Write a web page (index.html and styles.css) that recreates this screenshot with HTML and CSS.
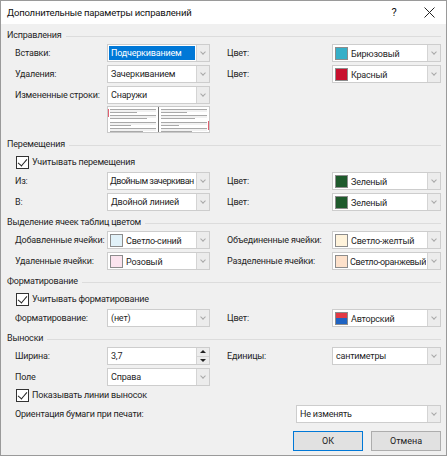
FILE: index.html
```html
<!DOCTYPE html>
<html lang="ru">
<head>
  <meta charset="UTF-8" />
  <title>Дополнительные параметры исправлений</title>
  <link rel="stylesheet" href="styles.css">
</head>
<body>

<div class="dialog">
  <div class="titlebar">
    <span class="title">Дополнительные параметры исправлений</span>
    <span class="help">?</span>
    <span class="close">
      <svg width="11" height="11" viewBox="0 0 11 11"><path d="M0.5 0.5 L10.5 10.5 M10.5 0.5 L0.5 10.5" stroke="#222" stroke-width="1" fill="none"/></svg>
    </span>
  </div>

  <div class="content">
    <!-- Исправления -->
    <div class="group-head"><span>Исправления</span></div>
    <div class="row">
      <label>Вставки:</label>
      <div class="combo"><span class="value selected">Подчеркиванием</span><span class="arrow"></span></div>
      <label class="second">Цвет:</label>
      <div class="combo"><span class="swatch turquoise"></span><span class="value low">Бирюзовый</span><span class="arrow"></span></div>
    </div>
    <div class="row">
      <label>Удаления:</label>
      <div class="combo"><span class="value">Зачеркиванием</span><span class="arrow"></span></div>
      <label class="second">Цвет:</label>
      <div class="combo"><span class="swatch red"></span><span class="value low">Красный</span><span class="arrow"></span></div>
    </div>
    <div class="row">
      <label>Измененные строки:</label>
      <div class="combo"><span class="value">Снаружи</span><span class="arrow"></span></div>
    </div>
    <div class="preview">
      <svg width="103" height="27" viewBox="0 0 103 27">
        <rect x="0.5" y="0.5" width="102" height="26" fill="#fff" stroke="#c8c8c8"/>
        <g stroke="#a9a9a9" stroke-width="1">
          <path d="M3 3.5H49 M3 6.5H30 M3 9.5H49 M3 12.5H40 M3 16.5H49 M3 19.5H24 M3 22.5H49 M3 25.5H36"/>
          <path d="M54 3.5H100 M54 6.5H80 M54 9.5H100 M54 12.5H88 M54 16.5H100 M54 19.5H72 M54 22.5H100 M54 25.5H85"/>
        </g>
        <g stroke="#e4e4e4" stroke-width="1">
          <path d="M3 5H49 M3 11H49 M3 18H49 M3 24H49 M54 5H100 M54 11H100 M54 18H100 M54 24H100"/>
        </g>
        <path d="M51.5 1V26" stroke="#707070"/>
        <path d="M1.5 3V11" stroke="#e06070" stroke-width="1"/>
        <path d="M101.5 15V24" stroke="#e06070" stroke-width="1"/>
      </svg>
    </div>

    <!-- Перемещения -->
    <div class="group-head"><span>Перемещения</span></div>
    <div class="check-row"><span class="checkbox checked"></span><span>Учитывать перемещения</span></div>
    <div class="row">
      <label>Из:</label>
      <div class="combo"><span class="value tighter">Двойным зачеркиван</span><span class="arrow"></span></div>
      <label class="second">Цвет:</label>
      <div class="combo"><span class="swatch green"></span><span class="value low">Зеленый</span><span class="arrow"></span></div>
    </div>
    <div class="row">
      <label>В:</label>
      <div class="combo"><span class="value">Двойной линией</span><span class="arrow"></span></div>
      <label class="second">Цвет:</label>
      <div class="combo"><span class="swatch green"></span><span class="value low">Зеленый</span><span class="arrow"></span></div>
    </div>

    <!-- Выделение ячеек -->
    <div class="group-head"><span>Выделение ячеек таблиц цветом</span></div>
    <div class="row">
      <label>Добавленные ячейки:</label>
      <div class="combo"><span class="swatch lightblue"></span><span class="value low">Светло-синий</span><span class="arrow"></span></div>
      <label class="second">Объединенные ячейки:</label>
      <div class="combo"><span class="swatch lightyellow"></span><span class="value low">Светло-желтый</span><span class="arrow"></span></div>
    </div>
    <div class="row">
      <label>Удаленные ячейки:</label>
      <div class="combo"><span class="swatch pink"></span><span class="value low">Розовый</span><span class="arrow"></span></div>
      <label class="second">Разделенные ячейки:</label>
      <div class="combo"><span class="swatch lightorange"></span><span class="value low tight">Светло-оранжевый</span><span class="arrow"></span></div>
    </div>

    <!-- Форматирование -->
    <div class="group-head"><span>Форматирование</span></div>
    <div class="check-row"><span class="checkbox checked"></span><span>Учитывать форматирование</span></div>
    <div class="row">
      <label>Форматирование:</label>
      <div class="combo"><span class="value">(нет)</span><span class="arrow"></span></div>
      <label class="second">Цвет:</label>
      <div class="combo"><span class="swatch author"></span><span class="value low">Авторский</span><span class="arrow"></span></div>
    </div>

    <!-- Выноски -->
    <div class="group-head"><span>Выноски</span></div>
    <div class="row">
      <label>Ширина:</label>
      <div class="combo"><span class="value">3,7</span><span class="spin"><span class="up"></span><span class="down"></span></span></div>
      <label class="second">Единицы:</label>
      <div class="combo"><span class="value">сантиметры</span><span class="arrow"></span></div>
    </div>
    <div class="row">
      <label>Поле</label>
      <div class="combo"><span class="value">Справа</span><span class="arrow"></span></div>
    </div>
    <div class="check-row"><span class="checkbox checked"></span><span>Показывать линии выносок</span></div>
    <div class="row wide">
      <label>Ориентация бумаги при печати:</label>
      <div class="combo"><span class="value">Не изменять</span><span class="arrow"></span></div>
    </div>

    <div class="buttons">
      <button class="btn default">ОК</button>
      <button class="btn">Отмена</button>
    </div>
  </div>
</div>

</body>
</html>
```

FILE: styles.css
```css
* {
  box-sizing: border-box;
}

body {
  margin: 0;
  background-color: #f0f0f0;
  font-family: Roboto, 'Noto Sans', sans-serif;
  font-size: 9px;
  letter-spacing: -0.2px;
  color: #1f1f1f;
}

.dialog {
  width: 447px;
  height: 456px;
  border: 1px solid #9a9a9a;
  background-color: #f0f0f0;
  overflow: hidden;
}

.titlebar {
  display: flex;
  align-items: center;
  height: 23px;
  background-color: #fff;
  padding-left: 6px;
}

.title {
  flex: 1;
  font-size: 9.5px;
  letter-spacing: -0.2px;
  color: #111;
}

.help {
  width: 20px;
  text-align: center;
  font-size: 11px;
  color: #111;
  margin-right: 14px;
}

.close {
  display: flex;
  width: 22px;
  justify-content: center;
  margin-right: 6px;
}

.content {
  padding: 3px 5px 0 6px;
}

.group-head {
  display: flex;
  align-items: center;
  height: 16px;
  margin-top: 3px;
  white-space: nowrap;
}

.group-head:first-child {
  margin-top: 0;
}

.group-head::after {
  content: "";
  flex: 1;
  height: 1px;
  background-color: #dcdcdc;
  margin-left: 4px;
  margin-top: 2px;
}

.row {
  display: grid;
  grid-template-columns: 92px 103px 122px 109px;
  align-items: center;
  height: 18px;
  margin-top: 3px;
  padding-left: 8px;
}

.row label {
  white-space: nowrap;
}

.group-head + .row,
.check-row + .row {
  margin-top: 1px;
}

.row.wide {
  grid-template-columns: 281px 145px;
}

.row label.second {
  padding-left: 17px;
}

.combo {
  display: flex;
  align-items: center;
  height: 18px;
  background-color: #fff;
  border: 1px solid #cdcdcd;
  padding: 1px;
}

.combo .value {
  flex: 1;
  height: 100%;
  line-height: 14px;
  padding-left: 2px;
  white-space: nowrap;
  overflow: hidden;
}

.combo .value.low {
  line-height: 17px;
  padding-left: 3px;
}

.combo .value.tight {
  letter-spacing: -0.35px;
  padding-left: 2px;
}

.combo .value.tighter {
  letter-spacing: -0.5px;
  padding-left: 1px;
}

.combo .value.selected {
  background-color: #0078d7;
  color: #fff;
}

.arrow {
  width: 13px;
  height: 16px;
  margin: -1px -1px -1px 1px;
  background-color: #ececec;
  border-left: 1px solid #d4d4d4;
  position: relative;
  flex: none;
}

.arrow::after {
  content: "";
  position: absolute;
  left: 4px;
  top: 5px;
  width: 3px;
  height: 3px;
  border-right: 1px solid #a8a8a8;
  border-bottom: 1px solid #a8a8a8;
  transform: rotate(45deg);
}

.spin {
  display: flex;
  flex-direction: column;
  width: 13px;
  height: 16px;
  margin: -1px -1px -1px 1px;
  border-left: 1px solid #d4d4d4;
  flex: none;
}

.spin span {
  flex: 1;
  background-color: #ececec;
  display: flex;
  justify-content: center;
  align-items: center;
}

.spin .up {
  border-bottom: 1px solid #d4d4d4;
}

.spin .up::after {
  content: "";
  border-left: 3px solid transparent;
  border-right: 3px solid transparent;
  border-bottom: 3px solid #222;
}

.spin .down::after {
  content: "";
  border-left: 3px solid transparent;
  border-right: 3px solid transparent;
  border-top: 3px solid #222;
}

.swatch {
  width: 13px;
  height: 13px;
  margin-left: 1px;
  border: 1px solid #8c8c8c;
  flex: none;
}

.swatch.turquoise { background-color: #36afc8; }
.swatch.red { background-color: #c8102e; }
.swatch.green { background-color: #1e5a2c; }
.swatch.lightblue { background-color: #e1f1f8; }
.swatch.lightyellow { background-color: #fff3db; }
.swatch.pink { background-color: #fbe4ee; }
.swatch.lightorange { background-color: #fde1cb; }
.swatch.author { background: linear-gradient(#e23a45 50%, #1f63c2 50%); }

.preview {
  display: flex;
  height: 27px;
  margin-top: 2px;
  padding-left: 100px;
}

.check-row {
  display: flex;
  align-items: center;
  height: 18px;
  margin-top: 1px;
  padding-left: 9px;
  white-space: nowrap;
}

.row + .check-row {
  margin-top: 0;
}

.checkbox {
  width: 13px;
  height: 13px;
  border: 1px solid #333;
  background-color: #fff;
  margin-right: 3px;
  position: relative;
  flex: none;
}

.checkbox.checked::after {
  content: "";
  position: absolute;
  left: 3px;
  top: 0px;
  width: 4px;
  height: 8px;
  border-right: 1px solid #222;
  border-bottom: 1px solid #222;
  transform: rotate(40deg);
}

.buttons {
  display: flex;
  justify-content: flex-end;
  gap: 8px;
  margin-top: 8px;
}

.btn {
  width: 70px;
  height: 20px;
  font-family: inherit;
  font-size: 9px;
  color: #222;
  background-color: #e1e1e1;
  border: 1px solid #adadad;
  padding: 0;
}

.btn.default {
  border-color: #0078d7;
}
```
